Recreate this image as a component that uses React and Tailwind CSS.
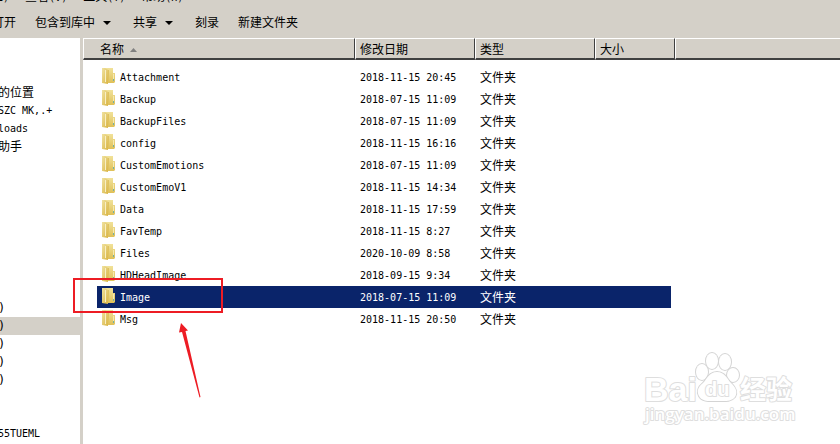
import React from 'react';

const MENUS = [
  { label: '编辑', hotkey: '(E)' },
  { label: '查看', hotkey: '(V)' },
  { label: '工具', hotkey: '(T)' },
  { label: '帮助', hotkey: '(H)' },
];

const FOLDERS = [
  { name: 'Attachment', date: '2018-11-15 20:45' },
  { name: 'Backup', date: '2018-07-15 11:09' },
  { name: 'BackupFiles', date: '2018-07-15 11:09' },
  { name: 'config', date: '2018-11-15 16:16' },
  { name: 'CustomEmotions', date: '2018-07-15 11:09' },
  { name: 'CustomEmoV1', date: '2018-11-15 14:34' },
  { name: 'Data', date: '2018-11-15 17:59' },
  { name: 'FavTemp', date: '2018-11-15 8:27' },
  { name: 'Files', date: '2020-10-09 8:58' },
  { name: 'HDHeadImage', date: '2018-09-15 9:34' },
  { name: 'Image', date: '2018-07-15 11:09', selected: true },
  { name: 'Msg', date: '2018-11-15 20:50' },
];

const Caret = () => (
  <svg className="w-2 h-1 ml-2 mr-[3px]" viewBox="0 0 8 4" aria-hidden="true">
    <path d="M0 0h8L4 4z" fill="#000" />
  </svg>
);

const FolderIcon = () => (
  <svg className="w-[14px] h-4 mb-0.5 shrink-0" viewBox="0 0 14 16" aria-hidden="true">
    <defs>
      <linearGradient id="flap" x1="0" x2="1" y1="0" y2="1">
        <stop offset="0" stopColor="#f0e2a0" />
        <stop offset="1" stopColor="#d9b544" />
      </linearGradient>
      <linearGradient id="back" x1="0" x2="0" y1="0" y2="1">
        <stop offset="0" stopColor="#f1e29a" />
        <stop offset="1" stopColor="#dfc058" />
      </linearGradient>
    </defs>
    <path d="M4 0h8v5h2v9l-1 1H4z" fill="url(#back)" />
    <path d="M1 0h3l3 2v14l-6-1z" fill="url(#flap)" />
    <path d="M4 2h1v12H4z" fill="#f8efc4" />
    <path d="M7 2h1v13H7z" fill="#e0c260" />
    <path d="M12 6h1v5h-1z" fill="#f7ebb0" />
    <path d="M12 11h1v2h-1z" fill="#6fb0a8" />
  </svg>
);

const ToolButton = ({ label, menu }) => (
  <button className="flex items-center whitespace-nowrap">
    {label}
    {menu && <Caret />}
  </button>
);

const TreeItem = ({ label, latin, selected }) => (
  <li className={selected ? 'bg-[#d4d0c8]' : ''}>
    <a href="#" className={`block -ml-0.5 whitespace-nowrap ${latin ? 'text-[10px]' : ''}`}>
      {label}
    </a>
  </li>
);

const Sidebar = () => (
  <nav className="w-20 shrink-0 overflow-hidden bg-white leading-[18px]">
    <ul className="pt-[46px]">
      <TreeItem label="的位置" />
      <TreeItem label="SZC MK,.+" latin />
      <TreeItem label="loads" latin />
      <TreeItem label="助手" />
    </ul>
    <ul className="pt-[143px]">
      <TreeItem label=")" />
      <TreeItem label=")" selected />
      <TreeItem label=")" />
      <TreeItem label=")" />
      <TreeItem label=")" />
    </ul>
    <ul className="pt-9">
      <TreeItem label="55TUEML" latin />
    </ul>
  </nav>
);

const HeadCell = ({ label, span, sorted }) => (
  <th
    colSpan={span}
    className={`h-[22px] p-0 text-left font-normal border-t border-l border-t-white border-l-white border-b-2 border-b-[#404040] bg-[#d4d0c8] ${
      label ? 'border-r border-r-[#404040]' : ''
    }`}
  >
    {label && (
      <span className={`flex items-center pt-0.5 leading-4 ${sorted ? 'pl-4' : 'pl-1'}`}>
        {label}
        {sorted && (
          <svg className="w-[7px] h-1 ml-1.5" viewBox="0 0 7 4" aria-hidden="true">
            <path d="M0 4h7L3.5 0z" fill="#808080" />
          </svg>
        )}
      </span>
    )}
  </th>
);

const FileRow = ({ name, date, selected }) => {
  const cell = selected ? 'bg-[#0a246a] text-white' : '';
  return (
    <tr className="h-[22px] whitespace-nowrap">
      <td className="p-0" />
      <td className={`p-0 text-[10px] ${cell}`}>
        <span className="flex items-center gap-[5px] pl-1">
          <FolderIcon />
          <span className="pt-0.5">{name}</span>
        </span>
      </td>
      <td className={`pt-0.5 pb-0 pr-0 pl-[5px] text-[10px] ${cell}`}>{date}</td>
      <td className={`pt-0.5 pb-0 pr-0 pl-[5px] ${cell}`}>文件夹</td>
      <td className={`p-0 ${cell}`} />
      <td className="p-0" />
      <td className="p-0" />
    </tr>
  );
};

const FileTable = () => (
  <table className="w-full table-fixed border-separate border-spacing-0 leading-[18px]">
    <colgroup>
      <col className="w-3.5" />
      <col className="w-[258px]" />
      <col className="w-[120px]" />
      <col className="w-[120px]" />
      <col className="w-[76px]" />
      <col className="w-1" />
      <col />
    </colgroup>
    <thead>
      <tr>
        <HeadCell label="名称" span={2} sorted />
        <HeadCell label="修改日期" />
        <HeadCell label="类型" />
        <HeadCell label="大小" span={2} />
        <HeadCell />
      </tr>
    </thead>
    <tbody>
      <tr className="h-1.5">
        <td colSpan={7} className="p-0" />
      </tr>
      {FOLDERS.map((f) => (
        <FileRow key={f.name} {...f} />
      ))}
    </tbody>
  </table>
);

// red box and arrow pointing at the Image folder
const Marker = () => (
  <>
    <div className="absolute left-[73px] top-[278px] w-[150px] h-[35px] border-2 border-[#ed1c24]" />
    <svg className="absolute left-[176px] top-[320px] w-7 h-20" viewBox="0 0 28 80" aria-hidden="true">
      <path d="M5 3l7 7.5-2.500.5L24.500 77l-1 .5L6 12l-3 .5z" fill="#ed1c24" />
    </svg>
  </>
);

const Watermark = () => (
  <svg
    className="absolute right-[40px] bottom-[14px] w-[160px] h-[80px]"
    viewBox="0 0 160 80"
    fill="#fff"
    stroke="#dedede"
    strokeWidth="2"
    strokeLinejoin="round"
    paintOrder="stroke"
    fontFamily="'Open Sans', 'Noto Sans CJK SC', sans-serif"
  >
    <text x="4" y="51" fontSize="34" fontWeight="700" fontFamily="'Liberation Sans', sans-serif">Bai</text>
    <g stroke="#d4d4d4" strokeWidth="2">
      <ellipse cx="62" cy="22" rx="6" ry="8" />
      <ellipse cx="72" cy="11" rx="6" ry="8" />
      <ellipse cx="85" cy="12" rx="6" ry="8" />
      <ellipse cx="93" cy="25" rx="6" ry="7" />
      <path d="M77 22c-8 0-10 7-14 11-6 5-6 9-4 13 3 6 11 5 18 5s14 1 18-4c3-5 1-9-4-14-4-4-6-11-14-11z" />
    </g>
    <text x="65" y="46" fontSize="20" fontWeight="700" fontFamily="'Liberation Sans', sans-serif">du</text>
    <text x="100" y="49" fontSize="26" fontWeight="700" fontFamily="'Noto Sans CJK SC', sans-serif">经验</text>
    <text x="5" y="70" fontSize="17" fontWeight="600">jingyan.baidu.com</text>
  </svg>
);

export default function App() {
  return (
    <div className="relative flex flex-col min-h-screen overflow-hidden bg-white text-black text-[12px] font-['SimSun','DejaVu_Sans_Mono','Noto_Sans_CJK_SC',monospace]">
      <div className="bg-[#d4d0c8]">
        <div className="flex items-end gap-4 h-[7px] -ml-[33px] overflow-hidden leading-[18px]">
          {MENUS.map((m) => (
            <button key={m.label} className="whitespace-nowrap">
              {m.label}
              <span className="text-[10px]">{m.hotkey}</span>
            </button>
          ))}
        </div>
        <div className="flex items-center gap-[19px] h-[31px] -ml-2">
          <ToolButton label="打开" />
          <ToolButton label="包含到库中" menu />
          <ToolButton label="共享" menu />
          <ToolButton label="刻录" />
          <ToolButton label="新建文件夹" />
        </div>
      </div>
      <div className="flex flex-1">
        <Sidebar />
        <div className="w-[3px] shrink-0 bg-[#d4d0c8]" />
        <main className="flex-1 min-w-0">
          <FileTable />
        </main>
      </div>
      <Marker />
      <Watermark />
    </div>
  );
}
